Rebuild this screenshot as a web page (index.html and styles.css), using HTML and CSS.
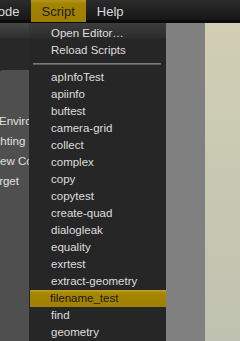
FILE: index.html
```html
<!DOCTYPE html>
<html>

<head>
    <title>Script Menu</title>
    <link rel="stylesheet" href="styles.css">
</head>

<body>
    <div class="menubar">
        <span class="mb-item mb-first">Mode</span>
        <span class="mb-item mb-active">Script</span>
        <span class="mb-item">Help</span>
    </div>

    <div class="main">
        <div class="panel">
            <div class="panel-head"></div>
            <div class="panel-gap"></div>
            <div class="panel-body">
                <div class="row">Environment</div>
                <div class="row row-light">Lighting Rig</div>
                <div class="row row-view">View Controls</div>
                <div class="row row-target">Target</div>
            </div>
        </div>
        <div class="gutter"></div>
        <div class="viewport"></div>

        <div class="dropdown">
            <div class="item">Open Editor…</div>
            <div class="item">Reload Scripts</div>
            <div class="sep"></div>
            <div class="item">apInfoTest</div>
            <div class="item">apiinfo</div>
            <div class="item">buftest</div>
            <div class="item">camera-grid</div>
            <div class="item">collect</div>
            <div class="item">complex</div>
            <div class="item">copy</div>
            <div class="item">copytest</div>
            <div class="item">create-quad</div>
            <div class="item">dialogleak</div>
            <div class="item">equality</div>
            <div class="item">exrtest</div>
            <div class="item">extract-geometry</div>
            <div class="item item-active">filename_test</div>
            <div class="item">find</div>
            <div class="item">geometry</div>
        </div>
    </div>
</body>

</html>
```

FILE: styles.css
```css
body {
    margin: 0;
    width: 240px;
    height: 341px;
    overflow: hidden;
    font-family: "Liberation Sans", Arial, sans-serif;
    background-color: #282828;
}

.menubar {
    display: flex;
    height: 23px;
    overflow: hidden;
    background: linear-gradient(#2c2c2c, #161616 20px, #0c0c0c 20px);
}

.mb-item {
    padding: 0 11px;
    height: 22px;
    line-height: 23px;
    font-size: 13px;
    color: #dcdcdc;
    white-space: nowrap;
}

.mb-first {
    margin-left: -24px;
}

.mb-active {
    color: #1c1c1c;
    background: linear-gradient(#b4961c, #a38300 4px, #9e7e00);
}

.main {
    position: relative;
    display: flex;
    height: 318px;
}

.panel {
    width: 166px;
    display: flex;
    flex-direction: column;
    background-color: #282828;
    overflow: hidden;
}

.panel-head {
    height: 15px;
    background: linear-gradient(#464646, #2e2e2e);
}

.panel-gap {
    height: 32px;
}

.panel-body {
    flex: 1;
    padding-top: 41px;
    background-color: #4f4f4f;
    border-top-left-radius: 3px;
}

/* the dropdown covers everything right of x=29 */
.row {
    width: 29px;
    overflow: hidden;
    height: 20px;
    line-height: 20px;
    font-size: 11.5px;
    color: #e0e0e0;
    white-space: nowrap;
    text-indent: -1px;
}

.row-light {
    text-indent: -15px;
}

.row-view {
    text-indent: -10px;
}

.row-target {
    text-indent: -13px;
}

.gutter {
    width: 39px;
    background-color: #808080;
}

.viewport {
    flex: 1;
    background: linear-gradient(#d1ceb4, #bfc2b0);
}

.dropdown {
    position: absolute;
    left: 29px;
    top: 0;
    width: 137px;
    height: 330px;
    padding-top: 2px;
    background: linear-gradient(#3c3c3c, #2c2c2c 15px, #262626 15px);
}

.item {
    height: 17px;
    line-height: 17px;
    padding-left: 21px;
    margin-left: 1px;
    font-size: 11.5px;
    color: #dedede;
    white-space: nowrap;
}

.item-active {
    padding-left: 20px;
    color: #1a1a1a;
    background: linear-gradient(#c0a232, #a68700 3px, #9f7f00);
}

.sep {
    height: 2px;
    margin: 4px 5px 4px 4px;
    background: linear-gradient(#8a8a8a, #4a4a4a);
}
```
